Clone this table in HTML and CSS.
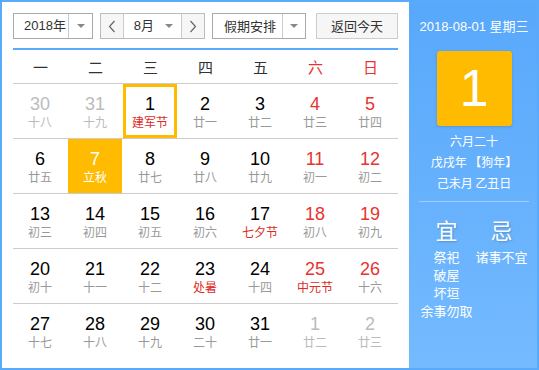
FILE: index.html
```html
<!DOCTYPE html>
<html lang="zh-CN">
<head>
<meta charset="utf-8">
<title>万年历</title>
<link rel="stylesheet" href="styles.css">
</head>
<body>
<div class="cal">
  <div class="main">
    <div class="toolbar">
      <div class="select year">
        <span class="sel-text">2018年</span>
        <span class="sel-arrow"><i class="tri"></i></span>
      </div>
      <div class="select month">
        <span class="nav"><svg width="8" height="13" viewBox="0 0 8 13"><polyline points="6.5,1 1.5,6.5 6.5,12" fill="none" stroke="#666" stroke-width="1.2"/></svg></span>
        <span class="sel-text month-text">8月<i class="tri"></i></span>
        <span class="nav"><svg width="8" height="13" viewBox="0 0 8 13"><polyline points="1.5,1 6.5,6.5 1.5,12" fill="none" stroke="#666" stroke-width="1.2"/></svg></span>
      </div>
      <div class="select holiday">
        <span class="sel-text">假期安排</span>
        <span class="sel-arrow"><i class="tri"></i></span>
      </div>
      <div class="btn">返回今天</div>
    </div>
    <div class="week-head">
      <span>一</span><span>二</span><span>三</span><span>四</span><span>五</span><span class="red">六</span><span class="red">日</span>
    </div>
    <div class="grid">
      <div class="row">
        <div class="day other"><b>30</b><em>十八</em></div>
        <div class="day other"><b>31</b><em>十九</em></div>
        <div class="day selected"><b>1</b><em class="fest">建军节</em></div>
        <div class="day"><b>2</b><em>廿一</em></div>
        <div class="day"><b>3</b><em>廿二</em></div>
        <div class="day wk"><b>4</b><em>廿三</em></div>
        <div class="day wk"><b>5</b><em>廿四</em></div>
      </div>
      <div class="row">
        <div class="day"><b>6</b><em>廿五</em></div>
        <div class="day today"><b>7</b><em>立秋</em></div>
        <div class="day"><b>8</b><em>廿七</em></div>
        <div class="day"><b>9</b><em>廿八</em></div>
        <div class="day"><b>10</b><em>廿九</em></div>
        <div class="day wk"><b>11</b><em>初一</em></div>
        <div class="day wk"><b>12</b><em>初二</em></div>
      </div>
      <div class="row">
        <div class="day"><b>13</b><em>初三</em></div>
        <div class="day"><b>14</b><em>初四</em></div>
        <div class="day"><b>15</b><em>初五</em></div>
        <div class="day"><b>16</b><em>初六</em></div>
        <div class="day"><b>17</b><em class="fest">七夕节</em></div>
        <div class="day wk"><b>18</b><em>初八</em></div>
        <div class="day wk"><b>19</b><em>初九</em></div>
      </div>
      <div class="row">
        <div class="day"><b>20</b><em>初十</em></div>
        <div class="day"><b>21</b><em>十一</em></div>
        <div class="day"><b>22</b><em>十二</em></div>
        <div class="day"><b>23</b><em class="fest">处暑</em></div>
        <div class="day"><b>24</b><em>十四</em></div>
        <div class="day wk"><b>25</b><em class="fest">中元节</em></div>
        <div class="day wk"><b>26</b><em>十六</em></div>
      </div>
      <div class="row last">
        <div class="day"><b>27</b><em>十七</em></div>
        <div class="day"><b>28</b><em>十八</em></div>
        <div class="day"><b>29</b><em>十九</em></div>
        <div class="day"><b>30</b><em>二十</em></div>
        <div class="day"><b>31</b><em>廿一</em></div>
        <div class="day other"><b>1</b><em>廿二</em></div>
        <div class="day other"><b>2</b><em>廿三</em></div>
      </div>
    </div>
  </div>
  <div class="side">
    <div class="side-date">2018-08-01 星期三</div>
    <div class="big-day">1</div>
    <div class="lunar-info">
      <div>六月二十</div>
      <div>戊戌年 【狗年】</div>
      <div>己未月 乙丑日</div>
    </div>
    <div class="divider"></div>
    <div class="yiji">
      <div class="col">
        <div class="yj-title">宜</div>
        <div class="yj-item">祭祀</div>
        <div class="yj-item">破屋</div>
        <div class="yj-item">坏垣</div>
        <div class="yj-item">余事勿取</div>
      </div>
      <div class="col">
        <div class="yj-title">忌</div>
        <div class="yj-item">诸事不宜</div>
      </div>
    </div>
  </div>
</div>
</body>
</html>
```

FILE: styles.css
```css
* { box-sizing: border-box; }
html, body { margin: 0; padding: 0; }
body {
  font-family: "Noto Sans CJK SC", "Liberation Sans", sans-serif;
  background: #fff;
}
.cal {
  width: 539px;
  height: 370px;
  border: 2px solid #5aaafb;
  display: flex;
  overflow: hidden;
}
.main {
  width: 407px;
  padding: 11px 11px 0;
  background: #fff;
}
.toolbar {
  display: flex;
  height: 37px;
  padding-bottom: 9px;
  border-bottom: 2px solid #5aaafb;
}
.select {
  height: 26px;
  display: flex;
  border: 1px solid #aaa;
  background: #fff;
  font-size: 13px;
  color: #333;
}
.sel-text {
  display: flex;
  align-items: center;
  line-height: 24px;
}
.sel-arrow {
  display: flex;
  align-items: center;
  justify-content: center;
  border-left: 1px solid #ccc;
  width: 24px;
}
.tri {
  display: inline-block;
  width: 0;
  height: 0;
  border-left: 4px solid transparent;
  border-right: 4px solid transparent;
  border-top: 4px solid #888;
}
.year { width: 80px; }
.year .sel-text { width: 55px; padding-left: 10px; font-family: "Liberation Sans", "Noto Sans CJK SC", sans-serif; }
.month { width: 105px; margin-left: 7px; border-color: #bbb; }
.nav {
  width: 22px;
  display: flex;
  align-items: center;
  justify-content: center;
  background: #f6f6f6;
}
.month-text {
  width: 60px;
  border-left: 1px solid #ccc;
  border-right: 1px solid #ccc;
  padding-left: 10px;
  justify-content: space-between;
  padding-right: 8px;
  font-family: "Liberation Sans", "Noto Sans CJK SC", sans-serif;
}
.holiday { width: 94px; margin-left: 7px; }
.holiday .sel-text { width: 70px; padding-left: 11px; }
.btn {
  margin-left: 10px;
  width: 82px;
  height: 26px;
  border: 1px solid #ccc;
  background: #f6f6f6;
  font-size: 13px;
  color: #333;
  text-align: center;
  line-height: 24px;
}
.week-head {
  display: grid;
  grid-template-columns: repeat(7, 55px);
  height: 34px;
  border-bottom: 1px solid #ccc;
  font-size: 15px;
  color: #333;
}
.week-head span {
  text-align: center;
  line-height: 33px;
}
.red { color: #e8332f; }
.row {
  display: grid;
  grid-template-columns: repeat(7, 55px);
  height: 55px;
  border-bottom: 1px solid #ccc;
}
.row.last { border-bottom: none; }
.day {
  width: 54px;
  height: 54px;
  text-align: center;
  padding-top: 10px;
}
.day b {
  display: block;
  font-weight: normal;
  font-family: "Liberation Sans", Arial, sans-serif;
  font-size: 18px;
  line-height: 20px;
  color: #000;
}
.day em {
  display: block;
  font-style: normal;
  font-size: 12px;
  line-height: 16px;
  color: #999;
}
.day.wk b { color: #e8332f; }
.day em.fest { color: #e02a24; }
.day.other b, .day.other em { color: #bbb; }
.day.today { background: #ffbb00; }
.day.today b, .day.today em { color: #fff; }
.day.selected { border: 3px solid #ffbb00; padding-top: 7px; }
.side {
  flex: 1;
  background: linear-gradient(#58a8fb, #74baff);
  color: #fff;
  padding: 15px 8px 0 10px;
  text-align: center;
}
.side-date {
  font-family: "Liberation Sans", "Noto Sans CJK SC", sans-serif;
  font-size: 13px;
  line-height: 20px;
  white-space: nowrap;
}
.big-day {
  width: 75px;
  height: 75px;
  margin: 14px auto 0;
  background: #ffbb00;
  border-radius: 3px;
  box-shadow: 0 1px 3px rgba(0, 0, 0, 0.15);
  font-family: "Liberation Sans", Arial, sans-serif;
  font-size: 52px;
  line-height: 75px;
  color: #fff;
}
.lunar-info {
  margin-top: 4px;
  font-size: 12px;
  line-height: 21px;
  white-space: nowrap;
}
.divider {
  margin-top: 8px;
  height: 1px;
  background: rgba(255, 255, 255, 0.35);
}
.yiji {
  display: flex;
  margin-top: 13px;
}
.col { width: 55px; }
.yj-title {
  font-size: 22px;
  line-height: 28px;
  height: 33px;
  text-shadow: 1px 1px 2px rgba(0, 0, 0, 0.2);
}
.yj-item {
  font-size: 13px;
  line-height: 18px;
  white-space: nowrap;
}
```
